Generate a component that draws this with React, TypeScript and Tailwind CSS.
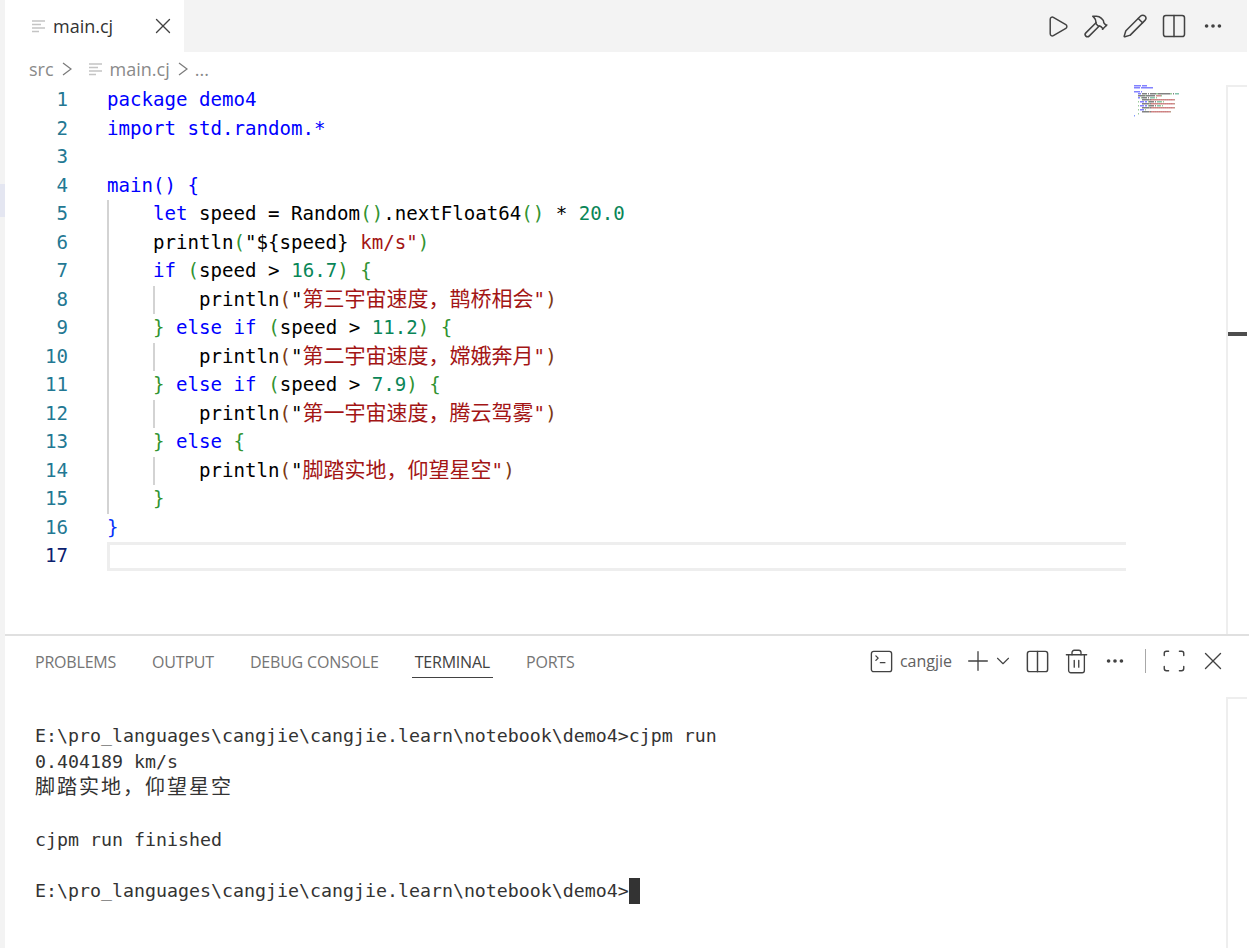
import { Play, Hammer, Pencil, Columns2, Ellipsis, X, SquareTerminal, Plus, ChevronDown, Trash2, Scan } from 'lucide-react';

const KW = '#0000ff';
const TX = '#000000';
const NUM = '#098658';
const STR = '#a31515';
const B1 = '#0431fa';
const B2 = '#319331';
const B3 = '#7b3814';

type Tok = [string, string];

const code: Tok[][] = [
  [['package demo4', KW]],
  [['import std.random.*', KW]],
  [],
  [['main() {', KW]],
  [['    ', TX], ['let', KW], [' speed = Random', TX], ['()', B2], ['.nextFloat64', TX], ['()', B2], [' * ', TX], ['20.0', NUM]],
  [['    println', TX], ['(', B2], ['"${speed}', TX], [' km/s"', STR], [')', B2]],
  [['    ', TX], ['if', KW], [' ', TX], ['(', B2], ['speed > ', TX], ['16.7', NUM], [')', B2], [' ', TX], ['{', B2]],
  [['        println', TX], ['(', B3], ['"', TX], ['第三宇宙速度，鹊桥相会"', STR], [')', B3]],
  [['    ', TX], ['}', B2], [' ', TX], ['else if', KW], [' ', TX], ['(', B2], ['speed > ', TX], ['11.2', NUM], [')', B2], [' ', TX], ['{', B2]],
  [['        println', TX], ['(', B3], ['"', TX], ['第二宇宙速度，嫦娥奔月"', STR], [')', B3]],
  [['    ', TX], ['}', B2], [' ', TX], ['else if', KW], [' ', TX], ['(', B2], ['speed > ', TX], ['7.9', NUM], [')', B2], [' ', TX], ['{', B2]],
  [['        println', TX], ['(', B3], ['"', TX], ['第一宇宙速度，腾云驾雾"', STR], [')', B3]],
  [['    ', TX], ['}', B2], [' ', TX], ['else', KW], [' ', TX], ['{', B2]],
  [['        println', TX], ['(', B3], ['"', TX], ['脚踏实地，仰望星空"', STR], [')', B3]],
  [['    ', TX], ['}', B2]],
  [['}', B1]],
  [],
];

const isCjk = (c: string) => c.charCodeAt(0) > 0x2e7f;

// split a token in latin / cjk runs so that cjk gets its own size
function runs(text: string) {
  const out: { text: string; cjk: boolean }[] = [];
  for (const c of text) {
    const cjk = isCjk(c);
    const last = out[out.length - 1];
    if (last && last.cjk === cjk) last.text += c;
    else out.push({ text: c, cjk });
  }
  return out;
}

function FileLines({ className }: { className?: string }) {
  return (
    <svg width="15" height="15" viewBox="0 0 15 15" className={className}>
      <path d="M1 2h13M1 5.5h9M1 9h13M1 12.5h7" stroke="#c4c4c4" strokeWidth="1.6" fill="none" />
    </svg>
  );
}

function Crumb() {
  return (
    <svg width="10" height="14" viewBox="0 0 10 14" className="ml-[8px]">
      <path d="M1 1l8 6-8 6" stroke="#7a7a7a" strokeWidth="1.2" fill="none" />
    </svg>
  );
}

// one small block for each character, same as the real minimap
function Minimap() {
  const rects: React.ReactNode[] = [];
  code.forEach((line, i) => {
    let x = 0;
    line.forEach((tok) => {
      for (const c of tok[0]) {
        const w = isCjk(c) ? 2 : 1;
        if (c !== ' ') {
          rects.push(<rect key={`${i}-${x}`} x={x} y={i * 2} width={w - 0.1} height={1.5} fill={tok[1]} opacity={0.55} />);
        }
        x += w;
      }
    });
  });
  return (
    <svg width="60" height="40" viewBox="0 0 60 40" className="block">
      {rects}
    </svg>
  );
}

function IconBox({ children }: { children: React.ReactNode }) {
  return <div className="w-[39px] h-[39px] flex items-center justify-center text-[#424242]">{children}</div>;
}

function CodeRow({ n, line }: { n: number; line: Tok[] }) {
  const active = n === 17;
  const guide1 = n >= 5 && n <= 15;
  const guide2 = n === 8 || n === 10 || n === 12 || n === 14;
  return (
    <div className="flex h-[28.5px] leading-[28.5px]">
      <div className={`w-[63px] text-right shrink-0 ${active ? 'text-[#0b216f]' : 'text-[#237893]'}`}>{n}</div>
      <div className="w-[39px] shrink-0" />
      <div className="relative flex-1 whitespace-pre">
        {guide1 && <span className="absolute left-0 top-0 bottom-0 w-[2px] bg-[#d3d3d3]" />}
        {guide2 && <span className="absolute left-[46px] top-0 bottom-0 w-[2px] bg-[#d3d3d3]" />}
        {active && <span className="absolute inset-0 border-[3px] border-r-0 border-[#eeeeee]" />}
        {line.map((tok, i) => (
          <span key={i} style={{ color: tok[1] }}>
            {runs(tok[0]).map((r, k) =>
              r.cjk ? (
                <span key={k} className="text-[21px] leading-none">{r.text}</span>
              ) : (
                <span key={k}>{r.text}</span>
              )
            )}
          </span>
        ))}
      </div>
    </div>
  );
}

function PanelTab({ label, active }: { label: string; active?: boolean }) {
  return (
    <div className={`h-[31px] flex items-center px-[3px] border-b ${active ? 'text-[#424242] border-[#424242]' : 'text-[#757575] border-transparent'}`}>
      {label}
    </div>
  );
}

export default function App() {
  return (
    <div className="h-screen w-full flex bg-white overflow-hidden font-['Open_Sans',sans-serif]">
      {/* activity strip, the sidebar is scrolled away */}
      <div className="w-[5px] shrink-0 bg-[#f3f3f3] pt-[184px]">
        <div className="h-[33px] bg-[#e4e6f1]" />
      </div>

      <div className="flex-1 min-w-0 flex flex-col mr-[2px]">
        {/* tab bar */}
        <div className="h-[52px] shrink-0 bg-[#f3f3f3] flex justify-between">
          <div className="w-[179px] bg-white flex items-center pl-[26px] text-[#333333] text-[18px]">
            <FileLines />
            <span className="ml-[7px]">main.cj</span>
            <X size={26} strokeWidth={1.25} className="ml-[37px] text-[#424242]" />
          </div>
          <div className="flex items-center pr-[14.5px]">
            <IconBox><Play size={25} strokeWidth={1.4} /></IconBox>
            <IconBox><Hammer size={26} strokeWidth={1.4} /></IconBox>
            <IconBox><Pencil size={26} strokeWidth={1.4} /></IconBox>
            <IconBox><Columns2 size={28} strokeWidth={1.3} /></IconBox>
            <IconBox><Ellipsis size={22} strokeWidth={2} /></IconBox>
          </div>
        </div>

        {/* breadcrumbs */}
        <div className="h-[34px] shrink-0 flex items-center pl-[24px] text-[18px] text-[#8a8a8a]">
          <span>src</span>
          <Crumb />
          <FileLines className="ml-[16px]" />
          <span className="ml-[7px]">main.cj</span>
          <Crumb />
          <span className="ml-[7px]">...</span>
        </div>

        {/* editor */}
        <div className="flex-1 min-h-0 flex">
          <div className="w-[1121px] shrink-0 font-['DejaVu_Sans_Mono','Noto_Sans_CJK_SC',monospace] text-[19.13px]">
            {code.map((line, i) => (
              <CodeRow key={i} n={i + 1} line={line} />
            ))}
          </div>
          <div className="w-[100px] shrink-0 pl-[8px] -mt-[1px]">
            <Minimap />
          </div>
          <div className="flex-1 border-l-2 border-t-2 border-[#eeeeee] -mt-[1px] pt-[245px]">
            <div className="h-[4px] bg-[#4d4d4d]" />
          </div>
        </div>

        {/* panel */}
        <div className="h-[314px] shrink-0 border-t-2 border-[#e0e0e0] flex flex-col -mr-[2px]">
          <div className="h-[61px] shrink-0 flex justify-between pl-[27px] pr-[16.5px]">
            <div className="flex gap-[30px] items-start pt-[11px] text-[16px] tracking-[-0.2px]">
              <PanelTab label="PROBLEMS" />
              <PanelTab label="OUTPUT" />
              <PanelTab label="DEBUG CONSOLE" />
              <PanelTab label="TERMINAL" active />
              <PanelTab label="PORTS" />
            </div>
            <div className="flex items-center text-[#424242] pb-[11px]">
              <SquareTerminal size={27} strokeWidth={1.2} />
              <span className="ml-[4.5px] mr-[10px] text-[16px] text-[#616161]">cangjie</span>
              <Plus size={32} strokeWidth={1} />
              <ChevronDown size={22} strokeWidth={1.2} className="-ml-[2px] mr-[3.5px]" />
              <IconBox><Columns2 size={27} strokeWidth={1.3} /></IconBox>
              <IconBox><Trash2 size={27} strokeWidth={1.2} /></IconBox>
              <IconBox><Ellipsis size={22} strokeWidth={2} /></IconBox>
              <div className="w-px h-[24px] bg-[#a8a8a8] ml-[10px] mr-[9px]" />
              <IconBox><Scan size={26} strokeWidth={1.3} /></IconBox>
              <IconBox><X size={30} strokeWidth={1.1} /></IconBox>
            </div>
          </div>

          <div className="flex-1 min-h-0 flex pr-[2px]">
            <div className="w-[1221px] shrink-0 pl-[30px] font-['DejaVu_Sans_Mono','Noto_Sans_CJK_SC',monospace] text-[18.27px] leading-[25.9px] text-[#333333] whitespace-pre">
              <div className="h-[26px]" />
              <div>E:\pro_languages\cangjie\cangjie.learn\notebook\demo4&gt;cjpm run</div>
              <div>0.404189 km/s</div>
              <div className="text-[20px] tracking-[2px]">脚踏实地，仰望星空</div>
              <div className="h-[25.9px]" />
              <div>cjpm run finished</div>
              <div className="h-[25.9px]" />
              <div className="flex items-center">
                <span>E:\pro_languages\cangjie\cangjie.learn\notebook\demo4&gt;</span>
                <span className="w-[11px] h-[26px] bg-[#333333]" />
              </div>
            </div>
            <div className="flex-1 border-l-2 border-t-2 border-[#eeeeee]" />
          </div>
        </div>
      </div>
    </div>
  );
}
